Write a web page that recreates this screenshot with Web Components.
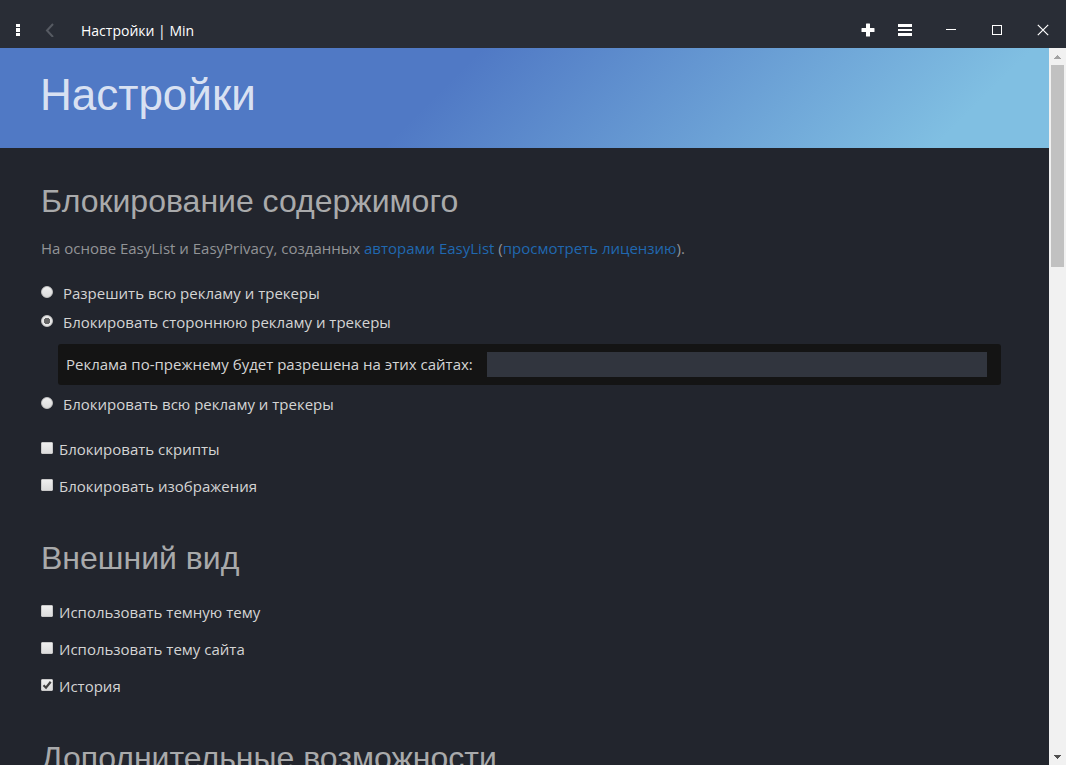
<!DOCTYPE html>
<html lang="ru">
<head>
<meta charset="utf-8">
<meta name="viewport" content="width=device-width, initial-scale=1">
<title>Настройки | Min</title>
<style>
  html, body { margin: 0; height: 100%; }
  body {
    background: #22252d;
    color: #d4d4d4;
    font: 15px/24px "Open Sans", "Noto Sans", sans-serif;
    overflow: hidden;
  }
</style>
</head>
<body>
<min-browser>
  <title-bar slot="bar">Настройки | Min</title-bar>
  <page-banner>Настройки</page-banner>
  <settings-section>
    <span slot="title">Блокирование содержимого</span>
    <license-note></license-note>
    <blocking-options></blocking-options>
    <check-option>Блокировать скрипты</check-option>
    <check-option>Блокировать изображения</check-option>
  </settings-section>
  <settings-section>
    <span slot="title">Внешний вид</span>
    <check-option>Использовать темную тему</check-option>
    <check-option>Использовать тему сайта</check-option>
    <check-option checked>История</check-option>
  </settings-section>
  <settings-section>
    <span slot="title">Дополнительные возможности</span>
  </settings-section>
</min-browser>

<script>
const define = (name, html, setup) => {
  const template = document.createElement('template');
  template.innerHTML = html;
  customElements.define(name, class extends HTMLElement {
    constructor() {
      super();
      this.attachShadow({ mode: 'open' }).append(template.content.cloneNode(true));
    }
    connectedCallback() { if (setup) setup(this, this.shadowRoot); }
  });
};

define('min-browser', `
  <style>
    :host { display: flex; flex-direction: column; height: 100vh; }
    .view { flex: 1; min-height: 0; display: flex; }
    main { flex: 1; min-width: 0; overflow: hidden; }
  </style>
  <slot name="bar"></slot>
  <div class="view">
    <main><slot></slot></main>
    <scroll-track></scroll-track>
  </div>`);

define('title-bar', `
  <style>
    :host {
      display: flex; align-items: flex-end; flex: none; height: 48px;
      background: #292d36; color: #fff;
    }
    button {
      display: grid; place-items: center; width: 46px; height: 36px;
      margin: 0; padding: 0; border: 0; background: none; color: inherit;
    }
    svg { display: block; }
    .menu { width: 36px; }
    .back { width: 26px; color: #565a62; }
    .tools { display: flex; margin-right: 5px; }
    .tools button { width: 37px; }
    .title { flex: 1; padding-left: 19px; font-size: 14px; line-height: 34px; }
  </style>
  <button class="menu" aria-label="Меню">
    <svg width="4" height="14" fill="currentColor"><rect y="1" width="4" height="3"/><rect y="5" width="4" height="4"/><rect y="10" width="4" height="3"/></svg>
  </button>
  <button class="back" aria-label="Назад">
    <svg width="10" height="14" fill="none" stroke="currentColor" stroke-width="2"><path d="M9 1 3 7.500 9 14"/></svg>
  </button>
  <span class="title"><slot></slot></span>
  <div class="tools">
    <button aria-label="Новая вкладка">
      <svg width="14" height="14" fill="currentColor"><path d="M5.500.5h3q.5 0 .5.500v4h4q.5 0 .5.500v3q0 .5-.5.500H9v4q0 .5-.5.500h-3q-.5 0-.5-.5V9H1Q.5 9 .5 8.500v-3Q.5 5 1 5h4V1q0-.5.5-.5z"/></svg>
    </button>
    <button aria-label="Список задач">
      <svg width="14" height="14" fill="currentColor"><rect y="1" width="14" height="3"/><rect y="6" width="14" height="2"/><rect y="10" width="14" height="3"/></svg>
    </button>
  </div>
  <button aria-label="Свернуть">
    <svg width="10" height="12" fill="currentColor"><rect y="5" width="10" height="1"/></svg>
  </button>
  <button aria-label="Развернуть">
    <svg width="10" height="10" fill="none" stroke="currentColor"><rect x=".5" y=".5" width="9" height="9"/></svg>
  </button>
  <button aria-label="Закрыть">
    <svg width="12" height="12" fill="none" stroke="currentColor" stroke-width="1.200"><path d="M.8.800 11.200 11.200M11.200.8.800 11.200"/></svg>
  </button>`);

define('scroll-track', `
  <style>
    :host {
      display: grid; grid-template-rows: 17px 202fr 481fr 17px; flex: none;
      width: 17px; background: #f1f1f1;
    }
    svg { place-self: center; }
    .thumb { margin: 0 2px; background: #c1c1c1; }
    .rest { display: block; }
  </style>
  <svg width="7" height="4" fill="#a3a3a3" shape-rendering="crispEdges"><path d="M3 0h1v1h1v1h1v1h1v1H0V3h1V2h1V1h1z"/></svg>
  <span class="thumb"></span>
  <span class="rest"></span>
  <svg width="7" height="4" fill="#505050" shape-rendering="crispEdges"><path d="M0 0h7v1H6v1H5v1H4v1H3V3H2V2H1V1H0z"/></svg>`);

define('page-banner', `
  <style>
    :host {
      display: block; padding: 0 40px; height: 100px;
      background: linear-gradient(135deg, #5079c5 42%, #80bfe2 90%);
    }
    h1 {
      margin: 0; color: rgba(255, 255, 255, .8);
      font: 400 44px/94px "Liberation Sans", Arial, sans-serif;
    }
  </style>
  <h1><slot></slot></h1>`);

define('settings-section', `
  <style>
    :host { display: block; padding: 33px 48px 0 41px; }
    h2 {
      margin: 0 0 16px; color: #a9aaab;
      font: 400 32px/40px "Liberation Sans", Arial, sans-serif;
    }
  </style>
  <h2><slot name="title"></slot></h2>
  <slot></slot>`);

define('license-note', `
  <style>
    :host { display: block; margin-bottom: 20px; line-height: 22px; color: #929497; }
    p { margin: 0; }
    a { color: #2068b0; text-decoration: none; }
  </style>
  <p>На основе EasyList и EasyPrivacy, созданных <a href="#authors">авторами EasyList</a> (<a href="#license">просмотреть лицензию</a>).</p>`);

define('blocking-options', `
  <style>
    :host { display: block; margin-bottom: 12px; }
    .row {
      display: flex; align-items: center; gap: 10px;
      box-sizing: border-box; height: 29px; padding-bottom: 2px;
    }
    input[type=radio] {
      appearance: none; box-sizing: border-box; width: 12px; height: 12px;
      margin: 0 0 2px; border-radius: 50%;
      background: linear-gradient(#efefef, #dcdcdc); border: 1px solid #c4c4c4;
    }
    input[type=radio]:checked {
      background: radial-gradient(circle, #666 0 3px, #e8e8e8 3px);
    }
    .panel {
      display: flex; align-items: center; gap: 14px;
      margin: 7px 0 5px 17px; padding: 8px 14px 8px 8px;
      background: #141414; border-radius: 3px;
    }
    .panel label { line-height: 25px; }
    .panel input {
      flex: 1; min-width: 0; height: 25px; box-sizing: border-box; margin: 0;
      padding: 0 6px; border: 0; background: #31353e; color: inherit; font: inherit;
    }
  </style>
  <div class="row"><input type="radio" name="level" id="none"><label for="none">Разрешить всю рекламу и трекеры</label></div>
  <div class="row"><input type="radio" name="level" id="third" checked><label for="third">Блокировать стороннюю рекламу и трекеры</label></div>
  <div class="panel">
    <label for="sites">Реклама по-прежнему будет разрешена на этих сайтах:</label>
    <input type="text" id="sites">
  </div>
  <div class="row"><input type="radio" name="level" id="all"><label for="all">Блокировать всю рекламу и трекеры</label></div>`);

define('check-option', `
  <style>
    :host { display: block; }
    label {
      display: flex; align-items: center; gap: 6px;
      box-sizing: border-box; height: 37px; padding-bottom: 2px;
    }
    .box { display: grid; margin-bottom: 2px; }
    .box > * { grid-area: 1 / 1; }
    input {
      appearance: none; box-sizing: border-box; width: 12px; height: 12px; margin: 0;
      border: 1px solid #c8c8c8; border-radius: 1px;
      background: linear-gradient(#efefef, #dcdcdc);
    }
    svg { visibility: hidden; pointer-events: none; }
    input:checked + svg { visibility: visible; }
  </style>
  <label>
    <span class="box">
      <input type="checkbox">
      <svg width="12" height="12" fill="none" stroke="#404040" stroke-width="2.200"><path d="M2.500 6.300 5 8.700 9.700 2.800"/></svg>
    </span>
    <span><slot></slot></span>
  </label>`,
  (host, root) => { root.querySelector('input').checked = host.hasAttribute('checked'); });
</script>
</body>
</html>
